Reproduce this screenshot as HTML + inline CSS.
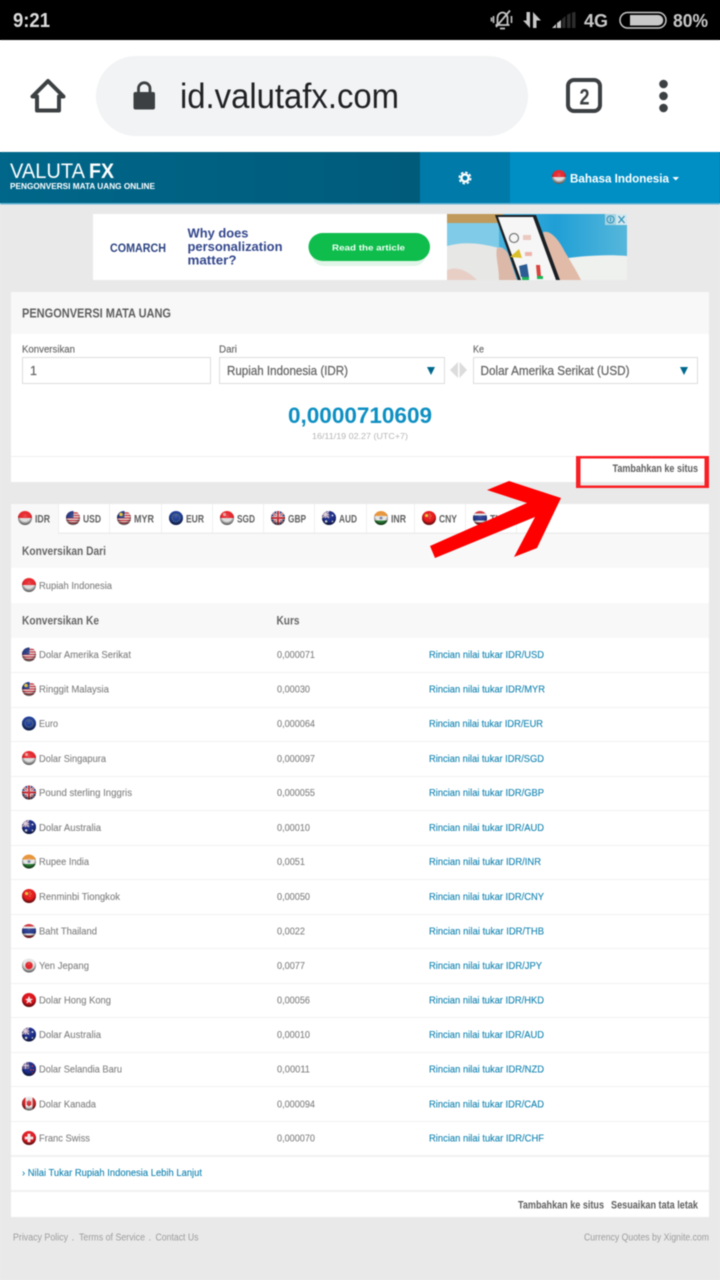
<!DOCTYPE html>
<html lang="id"><head><meta charset="utf-8"><title>Valuta FX</title>
<style>
html,body{margin:0;padding:0;width:720px;height:1280px;overflow:hidden;background:linear-gradient(#000 0,#000 40px,#fff 40px,#fff 152px,#00678a 152px,#00678a 203px,#e9e9e9 203px)}
svg.p{display:block;position:absolute;left:0;top:0;filter:blur(.45px)}
text{font-family:"Liberation Sans",sans-serif}
.b{font-weight:700}
.r{font-size:10.500px;fill:#808080;stroke:#808080;stroke-width:.1px}
.k{font-size:10.500px;fill:#808080;stroke:#808080;stroke-width:.1px}
.l{font-size:10.500px;fill:#0f82b0;stroke:#0f82b0;stroke-width:.1px}
.h{font-size:11.500px;font-weight:700;fill:#666}
.t{font-size:11px;font-weight:700;fill:#5f5f5f}
.f{font-size:10px;fill:#9c9c9c}
.ln{fill:#f1f1f1}
</style></head><body>
<svg class="p" width="720" height="1280" viewBox="0 0 720 1280" xmlns="http://www.w3.org/2000/svg">
<defs>
<clipPath id="c"><circle r="7"/></clipPath>
<radialGradient id="g" cx=".5" cy=".36" r=".66"><stop offset="0" stop-color="#fff" stop-opacity=".18"/><stop offset=".55" stop-color="#000" stop-opacity="0"/><stop offset="1" stop-color="#000" stop-opacity=".75"/></radialGradient>
<linearGradient id="hd" x1="0" x2="1"><stop offset="0" stop-color="#00678a"/><stop offset="1" stop-color="#005b7b"/></linearGradient>
<linearGradient id="pool" x1="0" x2="1" y1="0" y2="0"><stop offset="0" stop-color="#6cc2e2"/><stop offset=".6" stop-color="#1f9fd6"/><stop offset="1" stop-color="#57b7db"/></linearGradient>
<g id="gl"><circle r="7" fill="url(#g)"/></g>
<g id="id"><g clip-path="url(#c)"><rect x="-7" y="-7" width="14" height="7" fill="#ee2a30"/><rect x="-7" y="0" width="14" height="7" fill="#e4e4e4"/></g><use href="#gl"/></g>
<g id="us"><g clip-path="url(#c)"><rect x="-7" y="-7" width="14" height="14" fill="#eee"/><path d="M-7-5H7M-7-2.500H7M-7 0H7M-7 2.500H7M-7 5H7" stroke="#c9343c" stroke-width="1.300"/><rect x="-7" y="-7" width="7.500" height="7" fill="#2c3f86"/></g><use href="#gl"/></g>
<g id="my"><g clip-path="url(#c)"><rect x="-7" y="-7" width="14" height="14" fill="#eee"/><path d="M-7-5H7M-7-2.500H7M-7 0H7M-7 2.500H7M-7 5H7" stroke="#cf2f36" stroke-width="1.300"/><rect x="-7" y="-7" width="7.500" height="7" fill="#1f3d8a"/><circle cx="-3" cy="-3.500" r="1.800" fill="#f0c93a"/></g><use href="#gl"/></g>
<g id="eu"><circle r="7" fill="#20409c"/><circle r="3.800" fill="none" stroke="#8d9a4c" stroke-width=".8" stroke-dasharray="1 1"/><use href="#gl"/></g>
<g id="sg"><g clip-path="url(#c)"><rect x="-7" y="-7" width="14" height="7" fill="#ee2a30"/><rect x="-7" y="0" width="14" height="7" fill="#e4e4e4"/><circle cx="-2.500" cy="-3.500" r="1.600" fill="#f4a7a7"/></g><use href="#gl"/></g>
<g id="gb"><g clip-path="url(#c)"><rect x="-7" y="-7" width="14" height="14" fill="#2a3f85"/><path d="M-7-7L7 7M7-7L-7 7" stroke="#eee" stroke-width="2.400"/><path d="M-7-7L7 7M7-7L-7 7" stroke="#cf2a33" stroke-width=".9"/><path d="M0-7V7M-7 0H7" stroke="#eee" stroke-width="3.600"/><path d="M0-7V7M-7 0H7" stroke="#cf2a33" stroke-width="2"/></g><use href="#gl"/></g>
<g id="au"><g clip-path="url(#c)"><rect x="-7" y="-7" width="14" height="14" fill="#1d2f8e"/><rect x="-7" y="-7" width="7" height="7" fill="#6a5f96"/><path d="M-7-3.500H0M-3.500-7V0M-7-7L0 0M0-7L-7 0" stroke="#e8d5dc" stroke-width="1"/><circle cx="3.500" cy="-2.500" r=".9" fill="#fff"/><circle cx="3.500" cy="3.500" r=".9" fill="#fff"/><circle cx="-3" cy="3.500" r="1.300" fill="#fff"/></g><use href="#gl"/></g>
<g id="nz"><g clip-path="url(#c)"><rect x="-7" y="-7" width="14" height="14" fill="#1d2f8e"/><rect x="-7" y="-7" width="7" height="7" fill="#6a5f96"/><path d="M-7-3.500H0M-3.500-7V0" stroke="#e8d5dc" stroke-width="1"/><circle cx="3.500" cy="-3" r=".8" fill="#e33"/><circle cx="2" cy="1" r=".8" fill="#e33"/><circle cx="4.500" cy="1" r=".8" fill="#e33"/><circle cx="3.500" cy="4" r=".8" fill="#e33"/></g><use href="#gl"/></g>
<g id="in"><g clip-path="url(#c)"><rect x="-7" y="-7" width="14" height="5" fill="#f09a3c"/><rect x="-7" y="-2" width="14" height="4.500" fill="#eee"/><rect x="-7" y="2.500" width="14" height="5" fill="#2f8a3d"/><circle r="1.500" fill="#7a8bb0"/></g><use href="#gl"/></g>
<g id="cn"><circle r="7" fill="#ee1c1f"/><circle cx="-2.500" cy="-2.500" r="1.600" fill="#f0c93a"/><circle cx="1" cy="-4" r=".5" fill="#f0c93a"/><circle cx="2" cy="-2" r=".5" fill="#f0c93a"/><circle cx="1" cy=".2" r=".5" fill="#f0c93a"/><use href="#gl"/></g>
<g id="th"><g clip-path="url(#c)"><rect x="-7" y="-7" width="14" height="14" fill="#d83a43"/><rect x="-7" y="-4.500" width="14" height="9" fill="#eee"/><rect x="-7" y="-2.500" width="14" height="5" fill="#2b3f92"/></g><use href="#gl"/></g>
<g id="jp"><circle r="7" fill="#ececec"/><circle r="3.800" fill="#e8242b"/><use href="#gl"/></g>
<g id="hk"><circle r="7" fill="#e5141c"/><path d="M0-4L1.200-1.200 4-1 1.800.8 2.600 3.600 0 2-2.600 3.600-1.800.8-4-1-1.200-1.200Z" fill="#fbeaea"/><use href="#gl"/></g>
<g id="ca"><g clip-path="url(#c)"><rect x="-7" y="-7" width="14" height="14" fill="#f0f0f0"/><rect x="-7" y="-7" width="3.500" height="14" fill="#d82a30"/><rect x="3.500" y="-7" width="3.500" height="14" fill="#d82a30"/><path d="M0-4L1-2 2.500-2.500 2 .5 3 .5 0 3-3 .5-2 .5-2.500-2.500-1-2Z" fill="#d82a30"/></g><use href="#gl"/></g>
<g id="ch"><circle r="7" fill="#ea1f26"/><path d="M-1.400-4.200H1.400V-1.400H4.200V1.400H1.400V4.200H-1.400V1.400H-4.200V-1.400H-1.400Z" fill="#f6f6f6"/><use href="#gl"/></g>
</defs>

<rect width="720" height="1280" fill="#e9e9e9"/>

<!-- status bar -->
<rect width="720" height="40" fill="#000"/>
<text x="13" y="27" class="b" font-size="20" fill="#dcdcdc" textLength="37" lengthAdjust="spacingAndGlyphs">9:21</text>
<g fill="none" stroke="#c4c4c4" stroke-width="1.800">
<path d="M497.500 25V18a5 5.500 0 0 1 10 0V25H495.500H509.500M500 28.500h5"/>
<path d="M496 27L510 10.500"/>
<path d="M493.500 16v7M491.500 17.500v4M511.500 16v7" stroke-width="1.600"/>
</g>
<path d="M526.500 12H530V28L523 20.500H526.500ZM533 28V12L541 20.500H536.500V28Z" fill="#c8c8c8"/>
<path d="M552 28L556 24V28ZM557 28V23L561 20V28Z" fill="#c4c4c4"/>
<path d="M562 28V19L565.500 16V28ZM567 28V15L570.500 13V28ZM572 28V12.500L575.500 12V28Z" fill="#2c2c2c"/>
<text x="584" y="27" class="b" font-size="18" fill="#c8c8c8" textLength="24" lengthAdjust="spacingAndGlyphs">4G</text>
<rect x="620" y="12.500" width="46" height="15.500" rx="7.700" fill="none" stroke="#c8c8c8" stroke-width="1.500"/>
<path d="M630 15H658a5 5 0 0 1 0 10.500H630Z" fill="#c8c8c8"/>
<text x="673" y="27" class="b" font-size="18" fill="#c8c8c8" textLength="35" lengthAdjust="spacingAndGlyphs">80%</text>

<!-- browser bar -->
<rect y="40" width="720" height="112" fill="#fff"/>
<path d="M48 81L32.500 96.500H37V110.500H59V96.500H63.500Z" fill="none" stroke="#3c4043" stroke-width="4" stroke-linejoin="round"/>
<rect x="96" y="56" width="432" height="80" rx="40" fill="#f1f3f4"/>
<rect x="133.500" y="92" width="21.500" height="17.500" rx="2" fill="#3c4043"/>
<path d="M138.500 93V88.500a5.700 5.700 0 0 1 11.500 0V93" fill="none" stroke="#3c4043" stroke-width="2.800"/>
<text x="180" y="108" font-size="35" fill="#202124" textLength="219" lengthAdjust="spacingAndGlyphs">id.valutafx.com</text>
<rect x="568" y="80" width="32" height="31" rx="6" fill="none" stroke="#3c4043" stroke-width="4"/>
<text x="579.500" y="104.500" class="b" font-size="22" fill="#3c4043" textLength="10" lengthAdjust="spacingAndGlyphs">2</text>
<circle cx="663.500" cy="84" r="4.300" fill="#3c4043"/><circle cx="663.500" cy="96" r="4.300" fill="#3c4043"/><circle cx="663.500" cy="108" r="4.300" fill="#3c4043"/>

<!-- site header -->
<rect y="152" width="420" height="51" fill="url(#hd)"/>
<rect x="420" y="152" width="90" height="51" fill="#007aa9"/>
<rect x="510" y="152" width="210" height="51" fill="#008fc5"/>
<rect y="203" width="720" height="1.500" fill="#63b3d2"/>
<text x="10" y="178" font-size="21" fill="#fff" textLength="75" lengthAdjust="spacingAndGlyphs">VALUTA</text>
<text x="89" y="178" class="b" font-size="21" fill="#fff" textLength="25" lengthAdjust="spacingAndGlyphs">FX</text>
<text x="10" y="189" class="b" font-size="8.500" fill="#fff" textLength="145" lengthAdjust="spacingAndGlyphs">PENGONVERSI MATA UANG ONLINE</text>
<g transform="translate(465,178)"><circle r="5.700" fill="none" stroke="#fff" stroke-width="1.600" stroke-dasharray="2.600 1.870"/><circle r="3.600" fill="none" stroke="#fff" stroke-width="2.400"/></g>
<use href="#id" transform="translate(559,177)"/>
<text x="570" y="182.500" class="b" font-size="12" fill="#fff" textLength="99" lengthAdjust="spacingAndGlyphs">Bahasa Indonesia</text>
<path d="M672.500 177H679L675.750 180.500Z" fill="#fff"/>

<!-- ad -->
<rect x="93" y="214" width="534" height="66" fill="#fff"/>
<text x="110" y="252" class="b" font-size="11.500" fill="#2c4381" textLength="56" lengthAdjust="spacingAndGlyphs">COMARCH</text>
<g class="b" font-size="12.500" fill="#33478c">
<text x="187.500" y="237.500" textLength="61" lengthAdjust="spacingAndGlyphs">Why does</text>
<text x="187.500" y="251" textLength="95" lengthAdjust="spacingAndGlyphs">personalization</text>
<text x="187.500" y="264.500" textLength="49" lengthAdjust="spacingAndGlyphs">matter?</text>
</g>
<rect x="312" y="242" width="114" height="24" rx="12" fill="#cdeed8" opacity=".6"/>
<rect x="308.500" y="233" width="121.500" height="28" rx="14" fill="#0fbd4c"/>
<text x="332" y="250.500" class="b" font-size="8.500" fill="#f2fff6" textLength="73" lengthAdjust="spacingAndGlyphs">Read the article</text>
<svg x="447" y="214" width="180" height="66" viewBox="0 0 180 66">
<rect width="180" height="66" fill="url(#pool)"/>
<rect width="56" height="9" fill="#bf9a5a"/>
<path d="M0 30C20 26 36 30 56 34V66H0Z" fill="#e7e7e6"/>
<path d="M0 9H52V34C30 28 14 28 0 32Z" fill="#7fcbe8"/>
<path d="M108 46C130 42 160 40 180 42V66H108Z" fill="#eff1ee"/>
<path d="M0 56C10 52 20 56 30 66H0Z" fill="#e8cfc6"/>
<path d="M96 18C104 16 112 26 118 38C124 48 130 58 134 66H108Z" fill="#e2baa8"/>
<path d="M48 1H89L113 66H71Z" fill="#1b1f24"/>
<path d="M51 3H86L109 66H74Z" fill="#f6f6f6"/>
<circle cx="67" cy="24" r="4.500" fill="none" stroke="#777" stroke-width="1.200"/>
<rect x="76" y="21" width="8" height="5" fill="#e9c9c0"/>
<path d="M63 43L72 35 75 44Z" fill="#dcc02a"/>
<rect x="78" y="38" width="7" height="4" fill="#efb4a8"/>
<path d="M72 52L80 50 82 63H74Z" fill="#2b5c93"/><path d="M89 51L93 51 94 62H90Z" fill="#d8443e"/>
<rect x="75" y="63" width="7" height="3" fill="#1bb457"/><rect x="90" y="62" width="6" height="3" fill="#1bb457"/>
<path d="M50 34C56 33 60 36 62 42L70 66H52C52 52 48 42 50 34Z" fill="#dcb8a8"/>
<rect x="158" y="0" width="11" height="11" fill="#a6d3e2"/><circle cx="163.500" cy="5.500" r="3.500" fill="none" stroke="#2b90b8" stroke-width="1"/><rect x="163" y="3.500" width="1" height="4" fill="#2b90b8"/>
<rect x="169" y="0" width="11" height="11" fill="#d4e8ef"/><path d="M171.500 2L177.500 9M177.500 2L171.500 9" stroke="#2b90b8" stroke-width="1.200"/>
</svg>

<!-- converter card -->
<rect x="11" y="292" width="698" height="190" fill="#fff"/>
<rect x="11" y="292" width="698" height="42" fill="#f8f8f8"/>
<text x="22" y="317.500" class="b" font-size="12.500" fill="#5f5f5f" textLength="149" lengthAdjust="spacingAndGlyphs">PENGONVERSI MATA UANG</text>
<g font-size="10.500" fill="#666" stroke="#666" stroke-width=".15">
<text x="22" y="352.500" textLength="53" lengthAdjust="spacingAndGlyphs">Konversikan</text>
<text x="219" y="352.500" textLength="18" lengthAdjust="spacingAndGlyphs">Dari</text>
<text x="473" y="352.500" textLength="11" lengthAdjust="spacingAndGlyphs">Ke</text>
</g>
<g fill="#fff" stroke="#ddd" stroke-width="1">
<rect x="22.500" y="357.500" width="188" height="26"/>
<rect x="219.500" y="357.500" width="225" height="26"/>
<rect x="473.500" y="357.500" width="224" height="26"/>
</g>
<g font-size="12.500" fill="#666" stroke="#666" stroke-width=".25">
<text x="30" y="375">1</text>
<text x="227" y="375" textLength="121" lengthAdjust="spacingAndGlyphs">Rupiah Indonesia (IDR)</text>
<text x="480.500" y="375" textLength="149" lengthAdjust="spacingAndGlyphs">Dolar Amerika Serikat (USD)</text>
</g>
<path d="M427 367H435L431 375ZM680 367H688L684 375Z" fill="#00688c"/>
<path d="M458 362V378L450 370ZM459.500 362V378L467 370Z" fill="#dcdcdc"/>
<text x="288" y="423" class="b" font-size="22" fill="#0d8fc2" textLength="144" lengthAdjust="spacingAndGlyphs">0,0000710609</text>
<text x="312" y="439" font-size="8.500" fill="#b5b5b5" textLength="96" lengthAdjust="spacingAndGlyphs">16/11/19 02.27 (UTC+7)</text>
<rect x="11" y="456" width="698" height="1" fill="#f0f0f0"/>
<text x="612.500" y="472" class="t" textLength="85.500" lengthAdjust="spacingAndGlyphs">Tambahkan ke situs</text>

<!-- table card -->
<rect x="11" y="504" width="698" height="713" fill="#fff"/>
<rect x="11" y="533" width="698" height="35" fill="#f8f8f8"/>
<rect x="11" y="603" width="698" height="35" fill="#f8f8f8"/>
<rect x="58" y="532.500" width="651" height="1.500" fill="#ececec"/>
<g fill="#efefef">
<rect x="58" y="504" width="1" height="29"/><rect x="109" y="504" width="1" height="29"/><rect x="161" y="504" width="1" height="29"/><rect x="212" y="504" width="1" height="29"/><rect x="263" y="504" width="1" height="29"/><rect x="314" y="504" width="1" height="29"/><rect x="366" y="504" width="1" height="29"/><rect x="414" y="504" width="1" height="29"/><rect x="465" y="504" width="1" height="29"/><rect x="516" y="504" width="1" height="29"/>
</g>
<rect x="11" y="504" width="47" height="30" fill="#f8f8f8"/>
<use href="#id" transform="translate(25,518)"/><text x="35" y="522.500" class="t" textLength="15" lengthAdjust="spacingAndGlyphs">IDR</text>
<use href="#us" transform="translate(73,518)"/><text x="83" y="522.500" class="t" textLength="18" lengthAdjust="spacingAndGlyphs">USD</text>
<use href="#my" transform="translate(124,518)"/><text x="134" y="522.500" class="t" textLength="20" lengthAdjust="spacingAndGlyphs">MYR</text>
<use href="#eu" transform="translate(176,518)"/><text x="186" y="522.500" class="t" textLength="18" lengthAdjust="spacingAndGlyphs">EUR</text>
<use href="#sg" transform="translate(227,518)"/><text x="237" y="522.500" class="t" textLength="18" lengthAdjust="spacingAndGlyphs">SGD</text>
<use href="#gb" transform="translate(278,518)"/><text x="288" y="522.500" class="t" textLength="18" lengthAdjust="spacingAndGlyphs">GBP</text>
<use href="#au" transform="translate(329,518)"/><text x="339" y="522.500" class="t" textLength="18" lengthAdjust="spacingAndGlyphs">AUD</text>
<use href="#in" transform="translate(381,518)"/><text x="391" y="522.500" class="t" textLength="15" lengthAdjust="spacingAndGlyphs">INR</text>
<use href="#cn" transform="translate(429,518)"/><text x="439" y="522.500" class="t" textLength="18" lengthAdjust="spacingAndGlyphs">CNY</text>
<use href="#th" transform="translate(480,518)"/><text x="490" y="522.500" class="t" textLength="18" lengthAdjust="spacingAndGlyphs">THB</text>

<text x="22" y="555" class="h" textLength="84" lengthAdjust="spacingAndGlyphs">Konversikan Dari</text>
<use href="#id" transform="translate(29,585)"/>
<text x="39" y="589" class="r" textLength="73" lengthAdjust="spacingAndGlyphs">Rupiah Indonesia</text>
<text x="22" y="624.500" class="h" textLength="77" lengthAdjust="spacingAndGlyphs">Konversikan Ke</text>
<text x="276.500" y="624.500" class="h" textLength="23" lengthAdjust="spacingAndGlyphs">Kurs</text>

<!-- rows -->
<rect class="ln" x="11" y="672" width="698" height="1"/><rect class="ln" x="11" y="707" width="698" height="1"/><rect class="ln" x="11" y="741" width="698" height="1"/><rect class="ln" x="11" y="776" width="698" height="1"/><rect class="ln" x="11" y="810" width="698" height="1"/><rect class="ln" x="11" y="845" width="698" height="1"/><rect class="ln" x="11" y="879" width="698" height="1"/><rect class="ln" x="11" y="914" width="698" height="1"/><rect class="ln" x="11" y="948" width="698" height="1"/><rect class="ln" x="11" y="983" width="698" height="1"/><rect class="ln" x="11" y="1017" width="698" height="1"/><rect class="ln" x="11" y="1052" width="698" height="1"/><rect class="ln" x="11" y="1086" width="698" height="1"/><rect class="ln" x="11" y="1121" width="698" height="1"/><rect class="ln" x="11" y="1155" width="698" height="2"/><rect class="ln" x="11" y="1190" width="698" height="2"/>

<use href="#us" transform="translate(29,654.500)"/><text x="39" y="658" class="r" textLength="92" lengthAdjust="spacingAndGlyphs">Dolar Amerika Serikat</text><text x="277" y="658" class="k" textLength="38" lengthAdjust="spacingAndGlyphs">0,000071</text><text x="429" y="658" class="l" textLength="115" lengthAdjust="spacingAndGlyphs">Rincian nilai tukar IDR/USD</text>
<use href="#my" transform="translate(29,689)"/><text x="39" y="692.500" class="r" textLength="70" lengthAdjust="spacingAndGlyphs">Ringgit Malaysia</text><text x="277" y="692.500" class="k" textLength="33" lengthAdjust="spacingAndGlyphs">0,00030</text><text x="429" y="692.500" class="l" textLength="116" lengthAdjust="spacingAndGlyphs">Rincian nilai tukar IDR/MYR</text>
<use href="#eu" transform="translate(29,723.500)"/><text x="39" y="727" class="r" textLength="19" lengthAdjust="spacingAndGlyphs">Euro</text><text x="277" y="727" class="k" textLength="38" lengthAdjust="spacingAndGlyphs">0,000064</text><text x="429" y="727" class="l" textLength="114" lengthAdjust="spacingAndGlyphs">Rincian nilai tukar IDR/EUR</text>
<use href="#sg" transform="translate(29,758)"/><text x="39" y="762" class="r" textLength="67" lengthAdjust="spacingAndGlyphs">Dolar Singapura</text><text x="277" y="762" class="k" textLength="38" lengthAdjust="spacingAndGlyphs">0,000097</text><text x="429" y="762" class="l" textLength="115" lengthAdjust="spacingAndGlyphs">Rincian nilai tukar IDR/SGD</text>
<use href="#gb" transform="translate(29,792.500)"/><text x="39" y="796" class="r" textLength="93" lengthAdjust="spacingAndGlyphs">Pound sterling Inggris</text><text x="277" y="796" class="k" textLength="38" lengthAdjust="spacingAndGlyphs">0,000055</text><text x="429" y="796" class="l" textLength="115" lengthAdjust="spacingAndGlyphs">Rincian nilai tukar IDR/GBP</text>
<use href="#au" transform="translate(29,827)"/><text x="39" y="831" class="r" textLength="62" lengthAdjust="spacingAndGlyphs">Dolar Australia</text><text x="277" y="831" class="k" textLength="33" lengthAdjust="spacingAndGlyphs">0,00010</text><text x="429" y="831" class="l" textLength="115" lengthAdjust="spacingAndGlyphs">Rincian nilai tukar IDR/AUD</text>
<use href="#in" transform="translate(29,861.500)"/><text x="39" y="865" class="r" textLength="50" lengthAdjust="spacingAndGlyphs">Rupee India</text><text x="277" y="865" class="k" textLength="28" lengthAdjust="spacingAndGlyphs">0,0051</text><text x="429" y="865" class="l" textLength="112" lengthAdjust="spacingAndGlyphs">Rincian nilai tukar IDR/INR</text>
<use href="#cn" transform="translate(29,896)"/><text x="39" y="900" class="r" textLength="81" lengthAdjust="spacingAndGlyphs">Renminbi Tiongkok</text><text x="277" y="900" class="k" textLength="33" lengthAdjust="spacingAndGlyphs">0,00050</text><text x="429" y="900" class="l" textLength="115" lengthAdjust="spacingAndGlyphs">Rincian nilai tukar IDR/CNY</text>
<use href="#th" transform="translate(29,931)"/><text x="39" y="934.500" class="r" textLength="58" lengthAdjust="spacingAndGlyphs">Baht Thailand</text><text x="277" y="934.500" class="k" textLength="28" lengthAdjust="spacingAndGlyphs">0,0022</text><text x="429" y="934.500" class="l" textLength="115" lengthAdjust="spacingAndGlyphs">Rincian nilai tukar IDR/THB</text>
<use href="#jp" transform="translate(29,965.500)"/><text x="39" y="969" class="r" textLength="50" lengthAdjust="spacingAndGlyphs">Yen Jepang</text><text x="277" y="969" class="k" textLength="28" lengthAdjust="spacingAndGlyphs">0,0077</text><text x="429" y="969" class="l" textLength="113" lengthAdjust="spacingAndGlyphs">Rincian nilai tukar IDR/JPY</text>
<use href="#hk" transform="translate(29,1000)"/><text x="39" y="1003.500" class="r" textLength="72" lengthAdjust="spacingAndGlyphs">Dolar Hong Kong</text><text x="277" y="1003.500" class="k" textLength="33" lengthAdjust="spacingAndGlyphs">0,00056</text><text x="429" y="1003.500" class="l" textLength="115" lengthAdjust="spacingAndGlyphs">Rincian nilai tukar IDR/HKD</text>
<use href="#au" transform="translate(29,1034.500)"/><text x="39" y="1038" class="r" textLength="62" lengthAdjust="spacingAndGlyphs">Dolar Australia</text><text x="277" y="1038" class="k" textLength="33" lengthAdjust="spacingAndGlyphs">0,00010</text><text x="429" y="1038" class="l" textLength="115" lengthAdjust="spacingAndGlyphs">Rincian nilai tukar IDR/AUD</text>
<use href="#nz" transform="translate(29,1069)"/><text x="39" y="1072.500" class="r" textLength="83" lengthAdjust="spacingAndGlyphs">Dolar Selandia Baru</text><text x="277" y="1072.500" class="k" textLength="33" lengthAdjust="spacingAndGlyphs">0,00011</text><text x="429" y="1072.500" class="l" textLength="115" lengthAdjust="spacingAndGlyphs">Rincian nilai tukar IDR/NZD</text>
<use href="#ca" transform="translate(29,1103.500)"/><text x="39" y="1107.500" class="r" textLength="57" lengthAdjust="spacingAndGlyphs">Dolar Kanada</text><text x="277" y="1107.500" class="k" textLength="38" lengthAdjust="spacingAndGlyphs">0,000094</text><text x="429" y="1107.500" class="l" textLength="115" lengthAdjust="spacingAndGlyphs">Rincian nilai tukar IDR/CAD</text>
<use href="#ch" transform="translate(29,1138)"/><text x="39" y="1141.500" class="r" textLength="51" lengthAdjust="spacingAndGlyphs">Franc Swiss</text><text x="277" y="1141.500" class="k" textLength="38" lengthAdjust="spacingAndGlyphs">0,000070</text><text x="429" y="1141.500" class="l" textLength="115" lengthAdjust="spacingAndGlyphs">Rincian nilai tukar IDR/CHF</text>

<text x="22" y="1176" class="l" textLength="180" lengthAdjust="spacingAndGlyphs">› Nilai Tukar Rupiah Indonesia Lebih Lanjut</text>
<text x="518" y="1208.500" class="t" textLength="86" lengthAdjust="spacingAndGlyphs">Tambahkan ke situs</text>
<text x="611" y="1208.500" class="t" textLength="87" lengthAdjust="spacingAndGlyphs">Sesuaikan tata letak</text>

<!-- footer -->
<text x="13" y="1240.500" class="f" textLength="55" lengthAdjust="spacingAndGlyphs">Privacy Policy</text>
<text x="71.500" y="1240.500" class="f">.</text>
<text x="79" y="1240.500" class="f" textLength="66" lengthAdjust="spacingAndGlyphs">Terms of Service</text>
<text x="148.500" y="1240.500" class="f">.</text>
<text x="155.500" y="1240.500" class="f" textLength="43" lengthAdjust="spacingAndGlyphs">Contact Us</text>
<text x="584" y="1240.500" class="f" textLength="125" lengthAdjust="spacingAndGlyphs">Currency Quotes by Xignite.com</text>

<!-- red annotation -->
<path d="M576 456H709V488H576ZM580.500 458.500V485.500H704.500V458.500Z" fill="#f91f24" fill-rule="evenodd"/>
<polygon points="430,546 527,503 487,490 509,481 561,498 537,548 514,557 535,517 435,558" fill="#fe0000"/>
</svg>
</body></html>
